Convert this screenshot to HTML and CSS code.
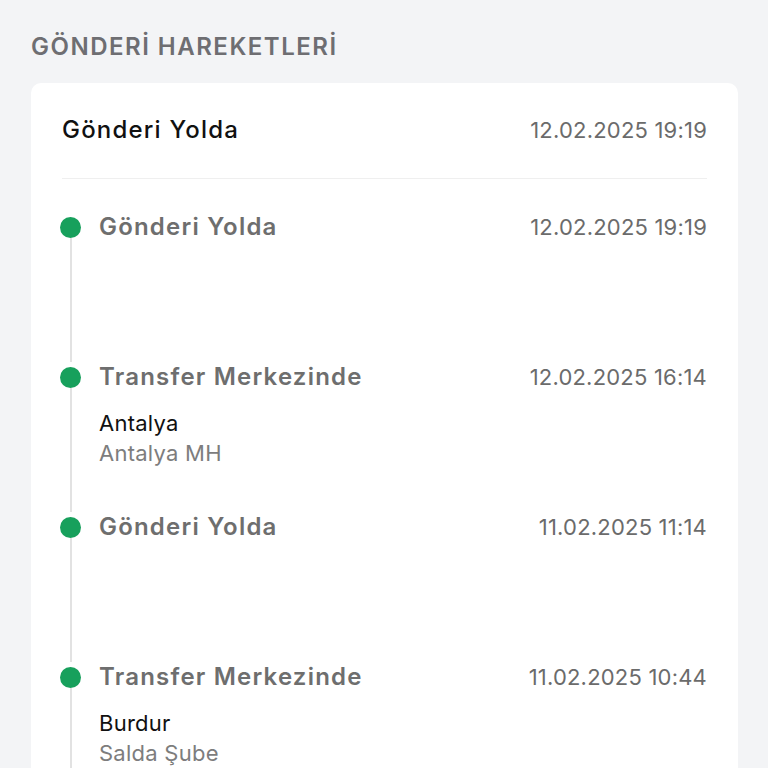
FILE: index.html
```html
<!DOCTYPE html>
<html lang="tr">
<head>
<meta charset="utf-8">
<link rel="stylesheet" href="styles.css">
</head>
<body>
<div class="page">
  <h2 class="heading">GÖNDERİ HAREKETLERİ</h2>
  <div class="card">
    <div class="card-head">
      <span class="head-title">Gönderi Yolda</span>
      <span class="date">12.02.2025 19:19</span>
    </div>
    <div class="divider"></div>
    <div class="timeline">
      <div class="item">
        <div class="marker"><span class="dot"></span><span class="line"></span></div>
        <div class="body">
          <div class="row"><span class="title">Gönderi Yolda</span><span class="date">12.02.2025 19:19</span></div>
          <div class="loc"></div>
        </div>
      </div>
      <div class="item">
        <div class="marker"><span class="dot"></span><span class="line"></span></div>
        <div class="body">
          <div class="row"><span class="title">Transfer Merkezinde</span><span class="date">12.02.2025 16:14</span></div>
          <div class="loc"><div class="city">Antalya</div><div class="branch">Antalya MH</div></div>
        </div>
      </div>
      <div class="item">
        <div class="marker"><span class="dot"></span><span class="line"></span></div>
        <div class="body">
          <div class="row"><span class="title">Gönderi Yolda</span><span class="date">11.02.2025 11:14</span></div>
          <div class="loc"></div>
        </div>
      </div>
      <div class="item">
        <div class="marker"><span class="dot"></span><span class="line"></span></div>
        <div class="body">
          <div class="row"><span class="title">Transfer Merkezinde</span><span class="date">11.02.2025 10:44</span></div>
          <div class="loc"><div class="city">Burdur</div><div class="branch">Salda Şube</div></div>
        </div>
      </div>
    </div>
  </div>
</div>
</body>
</html>
```
FILE: styles.css
```css
html, body {
  margin: 0;
  padding: 0;
  background: #f3f4f6;
  font-family: Inter, "Noto Sans", sans-serif;
  height: 768px;
  overflow: hidden;
}
.page {
  padding: 32px 30px 0 31px;
}
.heading {
  margin: 0 0 21px;
  font-size: 24px;
  line-height: 30px;
  font-weight: 600;
  color: #6e6e72;
  letter-spacing: 1.5px;
}
.card {
  background: #fff;
  border-radius: 10px;
  padding: 0 31px;
  min-height: 800px;
}
.card-head {
  display: flex;
  justify-content: space-between;
  align-items: center;
  padding: 32px 0 33px;
}
.head-title {
  font-size: 24px;
  line-height: 30px;
  font-weight: 500;
  color: #111;
  letter-spacing: 1.2px;
}
.date {
  font-size: 22px;
  line-height: 30px;
  color: #6b6b6b;
  font-weight: 400;
  letter-spacing: 0.2px;
}
.divider {
  height: 1px;
  background: #efefef;
}
.timeline {
  padding-top: 33px;
}
.item {
  display: flex;
}
.marker {
  display: flex;
  flex-direction: column;
  align-items: center;
  width: 21px;
  margin-left: -2px;
  margin-right: 18px;
  flex: none;
}
.dot {
  width: 21px;
  height: 21px;
  border-radius: 50%;
  background: #17a05c;
  margin-top: 5px;
  flex: none;
}
.line {
  flex: 1;
  width: 2px;
  background: #e2e2e2;
}
.body {
  flex: 1;
  padding-bottom: 44px;
}
.row {
  display: flex;
  justify-content: space-between;
  align-items: center;
}
.title {
  font-size: 24px;
  line-height: 30px;
  font-weight: 600;
  color: #6e6e6e;
  letter-spacing: 1.2px;
}
.loc {
  margin-top: 16px;
  min-height: 60px;
  font-size: 22px;
  line-height: 30px;
  letter-spacing: 0.25px;
}
.city {
  color: #111;
}
.branch {
  color: #7d7d7d;
}
```
